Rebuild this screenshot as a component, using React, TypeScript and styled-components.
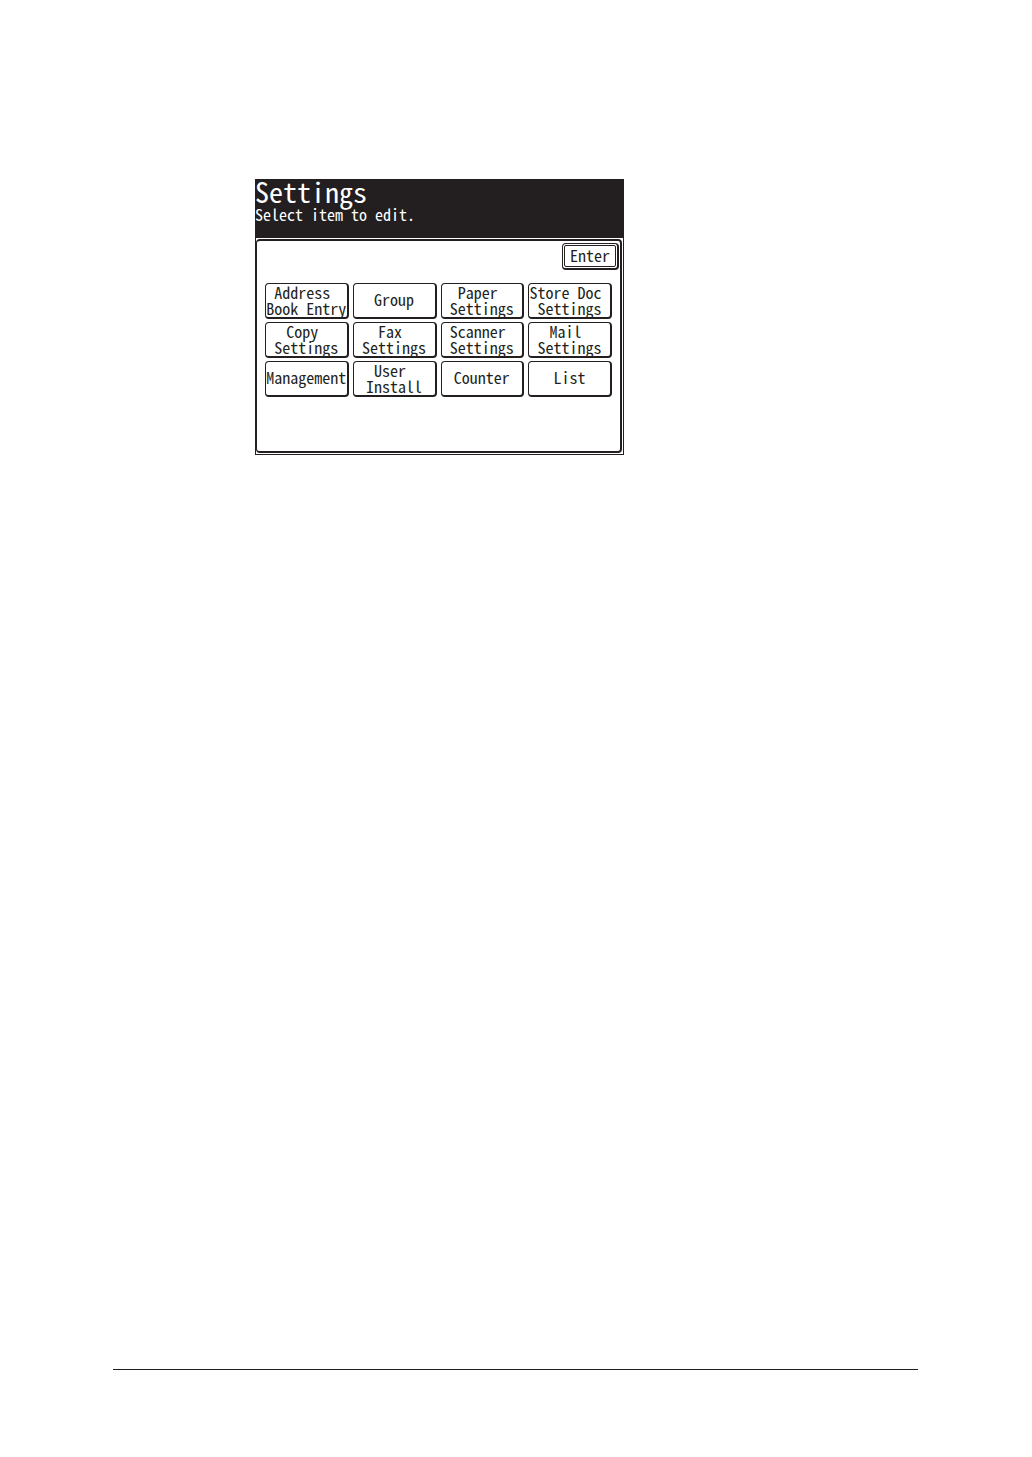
import React from 'react'
import styled, { createGlobalStyle } from 'styled-components'

const ink = '#231f20'

const settingsItems = [
  { id: 'address', label: 'Address \nBook Entry' },
  { id: 'group', label: 'Group' },
  { id: 'paper', label: 'Paper \nSettings' },
  { id: 'store', label: 'Store Doc \nSettings' },
  { id: 'copy', label: 'Copy \nSettings' },
  { id: 'fax', label: 'Fax \nSettings' },
  { id: 'scanner', label: 'Scanner \nSettings' },
  { id: 'mail', label: 'Mail \nSettings' },
  { id: 'management', label: 'Management' },
  { id: 'user', label: 'User \nInstall' },
  { id: 'counter', label: 'Counter' },
  { id: 'list', label: 'List' },
]

const GlobalStyle = createGlobalStyle`
  * {
    box-sizing: border-box;
  }

  body {
    margin: 0;
    background: #fff;
    color: ${ink};
    font-family: 'Noto Sans Mono CJK JP', 'DejaVu Sans Mono', 'Liberation Mono', monospace;
    font-size: 16px;
    line-height: 16px;
  }
`

const Page = styled.div`
  display: flex;
  flex-direction: column;
  justify-content: space-between;
  min-height: 100vh;
  padding: 179px 114px 87px 113px;
`

const Main = styled.main`
  padding-left: 142px;
`

const Screen = styled.section`
  width: 100%;
  max-width: 369px;
`

const Header = styled.header`
  min-height: 59px;
  background: ${ink};
  color: #fff;
`

const Title = styled.h1`
  margin: 0 0 3px;
  font-size: 28px;
  font-weight: 400;
  line-height: 24px;
`

const Hint = styled.p`
  margin: 0;
`

const Frame = styled.div`
  padding: 1px 1px 1px 0;
  border: 1px solid ${ink};
  border-top: 0;
`

const Panel = styled.div`
  display: flex;
  flex-direction: column;
  gap: 13px;
  min-height: 214px;
  padding: 2px 8px 52px;
  border: 2px solid ${ink};
  border-left-width: 1px;
  border-radius: 4px;
`

const EnterButton = styled.button`
  align-self: flex-end;
  margin-right: -7px;
  padding: 1px;
  border: 1px solid ${ink};
  border-width: 1px 2px 2px 1px;
  border-radius: 4px;
  background: #fff;
  color: inherit;
  font: inherit;
`

const EnterLabel = styled.span`
  display: block;
  padding: 1px 5px 3px;
  border: 1px solid ${ink};
  border-radius: 2px;
`

const Grid = styled.div`
  display: grid;
  grid-template-columns: repeat(4, 1fr);
  gap: 3px 4px;
`

const ItemButton = styled.button`
  height: 36px;
  padding: 0 0 3px;
  border: 1px solid ${ink};
  border-width: 1px 2px 2px 1px;
  border-radius: 4px;
  background: #fff;
  color: inherit;
  font: inherit;
  white-space: pre;
`

const Rule = styled.hr`
  width: 100%;
  margin: 0;
  border: 0;
  border-top: 1px solid ${ink};
`

function App() {
  return (
    <Page>
      <GlobalStyle />
      <Main>
        <Screen>
          <Header>
            <Title>Settings</Title>
            <Hint>Select item to edit.</Hint>
          </Header>
          <Frame>
            <Panel>
              <EnterButton type="button">
                <EnterLabel>Enter</EnterLabel>
              </EnterButton>
              <Grid>
                {settingsItems.map((item) => (
                  <ItemButton key={item.id} type="button">{item.label}</ItemButton>
                ))}
              </Grid>
            </Panel>
          </Frame>
        </Screen>
      </Main>
      <Rule />
    </Page>
  )
}

export default App
